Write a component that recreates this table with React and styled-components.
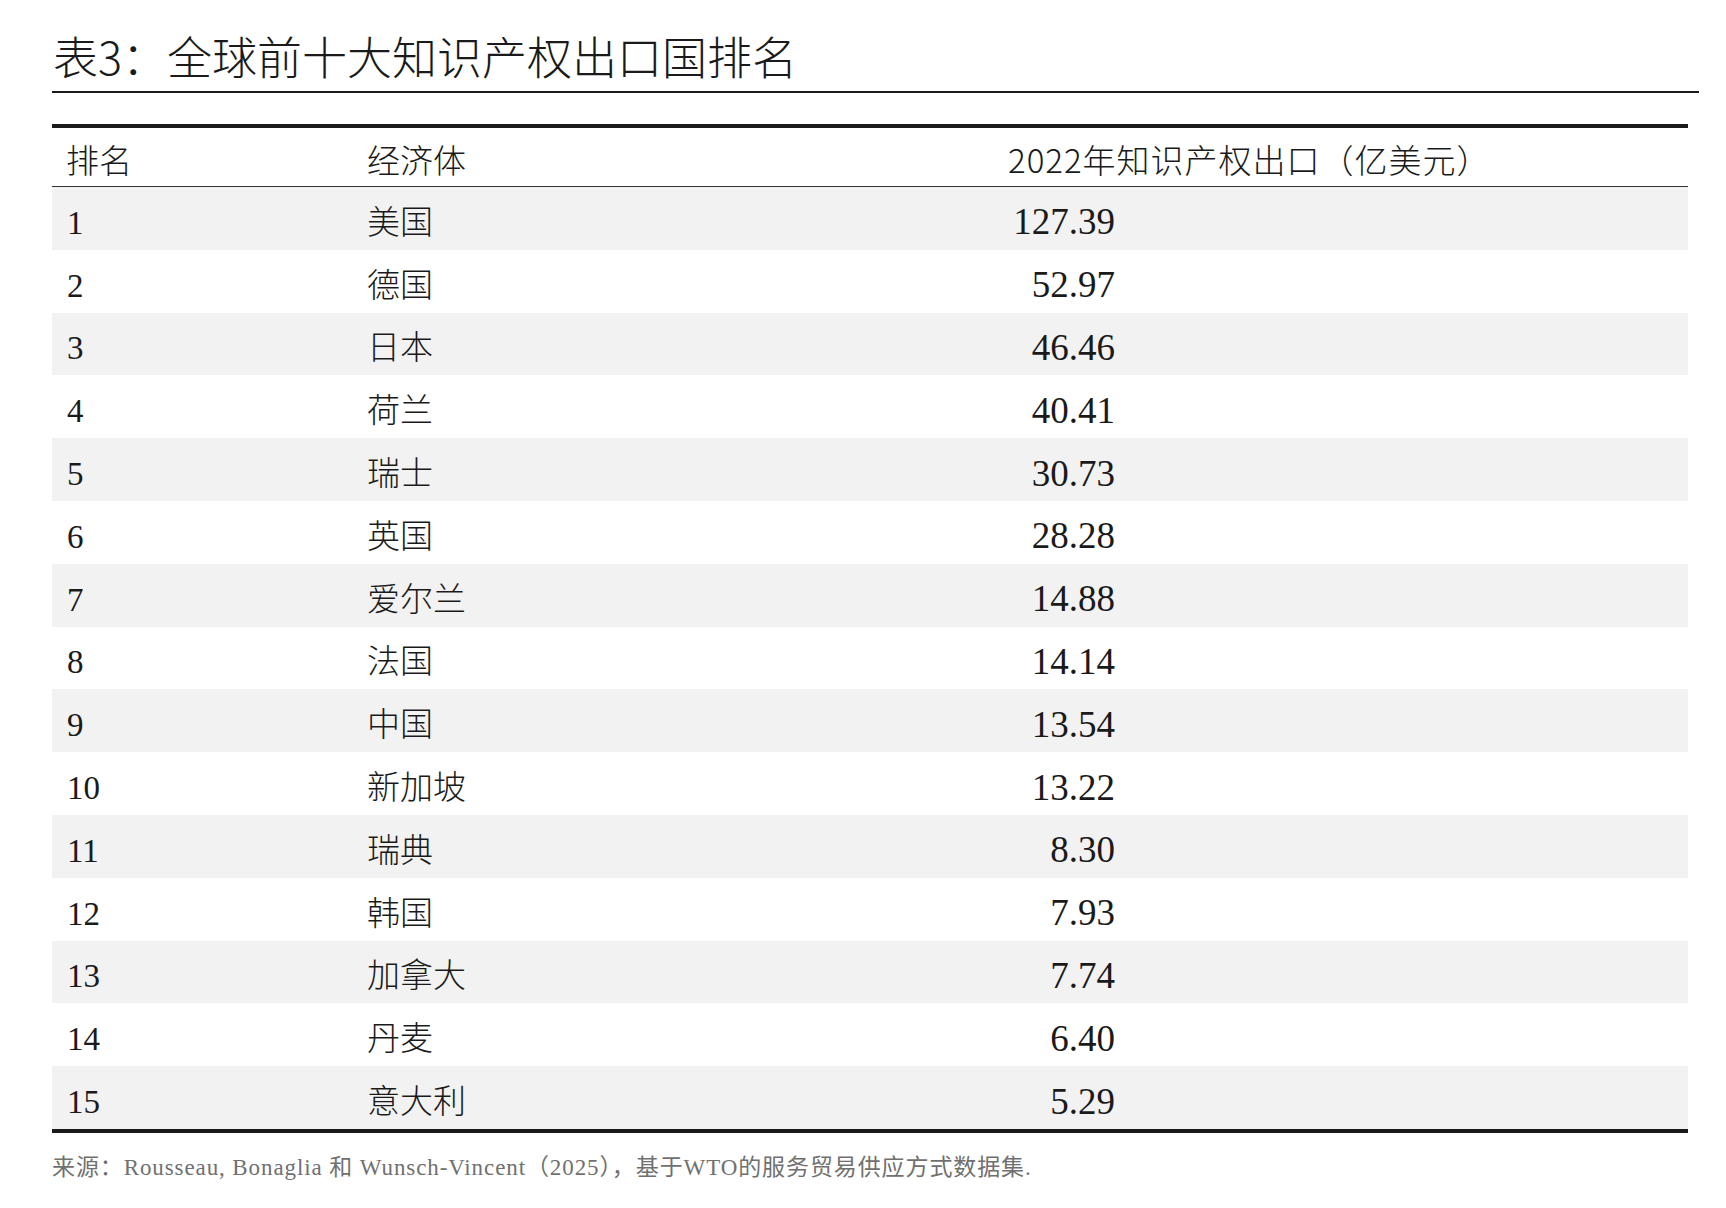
import React from 'react';
import styled, { createGlobalStyle } from 'styled-components';

const GlobalStyle = createGlobalStyle`
  body {
    margin: 0;
    background: #fff;
    color: #1a1a1a;
    font-family: "Liberation Serif", "Noto Sans CJK SC", serif;
  }
`

const Page = styled.div`
  width: 1726px;
  min-height: 1208px;
  padding-left: 52px;
  box-sizing: border-box;
`

const TitleBar = styled.div`
  width: 1647px;
  padding-top: 29px;
  padding-bottom: 8px;
  border-bottom: 2px solid #1a1a1a;
`

const Title = styled.h1`
  margin: 0;
  font-family: "Noto Sans CJK SC", sans-serif;
  font-weight: 300;
  font-size: 45px;
  line-height: 54px;
  color: #1a1a1a;
  padding-left: 1px;
`

const Table = styled.div`
  width: 1636px;
  margin-top: 31px;
  border-top: 4px solid #1a1a1a;
  border-bottom: 4px solid #1a1a1a;
`

const Row = styled.div`
  display: grid;
  grid-template-columns: 315px 641px 1fr;
  align-items: center;
  height: ${({ $head }) => ($head ? '59px' : '62.8px')};
  padding-top: ${({ $head }) => ($head ? '3px' : '9px')};
  box-sizing: border-box;
  background: ${({ $shade }) => ($shade ? '#f2f2f2' : '#fff')};
  border-bottom: ${({ $head }) => ($head ? '1px solid #333' : 'none')};
`

const HeadCell = styled.div`
  font-family: "Noto Sans CJK SC", sans-serif;
  font-weight: 300;
  font-size: 33px;
  line-height: 40px;
  letter-spacing: ${({ $wide }) => ($wide ? '1px' : '0')};
  padding-left: ${({ $first }) => ($first ? '14px' : '0')};
  white-space: nowrap;
`

const Cell = styled.div`
  font-family: "Liberation Serif", "Noto Sans CJK SC", serif;
  font-weight: 300;
  font-size: 33px;
  line-height: 40px;
  padding-left: ${({ $first }) => ($first ? '15px' : '0')};
  white-space: nowrap;
`

const Num = styled.span`
  display: inline-block;
  width: 107px;
  text-align: right;
  font-family: "Liberation Serif", serif;
  font-size: 37px;
  line-height: 40px;
`

const Note = styled.p`
  margin: 20px 0 0;
  font-family: "Liberation Serif", "Noto Sans CJK SC", serif;
  font-size: 23px;
  letter-spacing: 0.9px;
  line-height: 30px;
  color: #707070;
  white-space: nowrap;
`

const rows = [
  ['1', '美国', '127.39'],
  ['2', '德国', '52.97'],
  ['3', '日本', '46.46'],
  ['4', '荷兰', '40.41'],
  ['5', '瑞士', '30.73'],
  ['6', '英国', '28.28'],
  ['7', '爱尔兰', '14.88'],
  ['8', '法国', '14.14'],
  ['9', '中国', '13.54'],
  ['10', '新加坡', '13.22'],
  ['11', '瑞典', '8.30'],
  ['12', '韩国', '7.93'],
  ['13', '加拿大', '7.74'],
  ['14', '丹麦', '6.40'],
  ['15', '意大利', '5.29'],
]

export default function App() {
  return (
    <Page>
      <GlobalStyle />
      <TitleBar>
        <Title>表3：全球前十大知识产权出口国排名</Title>
      </TitleBar>

      <Table>
        <Row $head>
          <HeadCell $first>排名</HeadCell>
          <HeadCell>经济体</HeadCell>
          <HeadCell $wide>2022年知识产权出口（亿美元）</HeadCell>
        </Row>
        {rows.map(([rank, name, value], i) => (
          <Row key={rank} $shade={i % 2 === 0}>
            <Cell $first>{rank}</Cell>
            <Cell>{name}</Cell>
            <Cell><Num>{value}</Num></Cell>
          </Row>
        ))}
      </Table>

      <Note>来源：Rousseau, Bonaglia 和 Wunsch-Vincent（2025），基于WTO的服务贸易供应方式数据集.</Note>
    </Page>
  )
}
